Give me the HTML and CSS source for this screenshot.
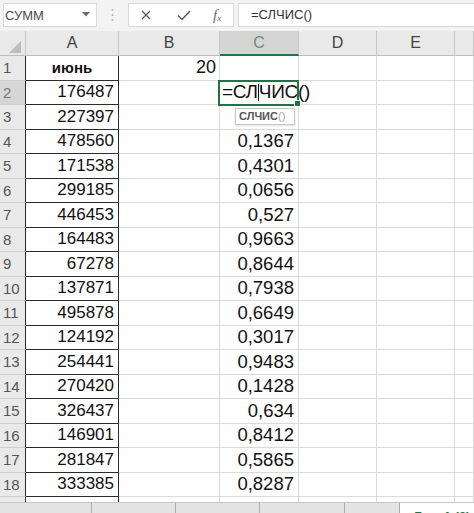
FILE: index.html
```html
<!DOCTYPE html>
<html lang="ru">
<head>
<meta charset="utf-8">
<link rel="stylesheet" href="styles.css">
</head>
<body>
<div class="app">
  <div class="toolbar">
    <div class="namebox">
      <span>СУММ</span>
      <svg class="dd" width="8" height="5" viewBox="0 0 8 5"><path d="M0 0H8L4 4.5Z" fill="#6b6b6b"/></svg>
    </div>
    <div class="grip">
      <svg width="3" height="14" viewBox="0 0 3 14"><circle cx="1.5" cy="2" r="1" fill="#b5b5b5"/><circle cx="1.5" cy="7" r="1" fill="#b5b5b5"/><circle cx="1.5" cy="12" r="1" fill="#b5b5b5"/></svg>
    </div>
    <div class="fbtns">
      <svg class="ico-x" width="10" height="10" viewBox="0 0 10 10"><path d="M1 1L9 9M9 1L1 9" stroke="#5a5a5a" stroke-width="1.3" fill="none"/></svg>
      <svg class="ico-ok" width="14" height="11" viewBox="0 0 14 11"><path d="M1 5.5L5 9.5L13 1" stroke="#5a5a5a" stroke-width="1.5" fill="none"/></svg>
      <span class="fx">f<sub>x</sub></span>
    </div>
    <div class="formula">=СЛЧИС()</div>
  </div>

  <div class="sheet">
    <div class="grid">
      <div class="c ch corner"><svg width="12" height="12" viewBox="0 0 12 12"><path d="M12 0V12H0Z" fill="#bdbdbd"/></svg></div>
      <div class="c ch">A</div>
      <div class="c ch">B</div>
      <div class="c ch active">C</div>
      <div class="c ch">D</div>
      <div class="c ch">E</div>
      <div class="c ch"></div>

      <div class="c rh">1</div><div class="c a bold">июнь</div><div class="c num big">20</div><div class="c"></div><div class="c"></div><div class="c"></div><div class="c"></div>
      <div class="c rh act">2</div><div class="c a num">176487</div><div class="c"></div><div class="c edit"><span class="etext">=СЛ<span class="caret"></span>ЧИС()</span><span class="tip"><b>СЛЧИС</b><i>()</i></span></div><div class="c"></div><div class="c"></div><div class="c"></div>
      <div class="c rh">3</div><div class="c a num">227397</div><div class="c"></div><div class="c"></div><div class="c"></div><div class="c"></div><div class="c"></div>
      <div class="c rh">4</div><div class="c a num">478560</div><div class="c"></div><div class="c num cv">0,1367</div><div class="c"></div><div class="c"></div><div class="c"></div>
      <div class="c rh">5</div><div class="c a num">171538</div><div class="c"></div><div class="c num cv">0,4301</div><div class="c"></div><div class="c"></div><div class="c"></div>
      <div class="c rh">6</div><div class="c a num">299185</div><div class="c"></div><div class="c num cv">0,0656</div><div class="c"></div><div class="c"></div><div class="c"></div>
      <div class="c rh">7</div><div class="c a num">446453</div><div class="c"></div><div class="c num cv">0,527</div><div class="c"></div><div class="c"></div><div class="c"></div>
      <div class="c rh">8</div><div class="c a num">164483</div><div class="c"></div><div class="c num cv">0,9663</div><div class="c"></div><div class="c"></div><div class="c"></div>
      <div class="c rh">9</div><div class="c a num">67278</div><div class="c"></div><div class="c num cv">0,8644</div><div class="c"></div><div class="c"></div><div class="c"></div>
      <div class="c rh">10</div><div class="c a num">137871</div><div class="c"></div><div class="c num cv">0,7938</div><div class="c"></div><div class="c"></div><div class="c"></div>
      <div class="c rh">11</div><div class="c a num">495878</div><div class="c"></div><div class="c num cv">0,6649</div><div class="c"></div><div class="c"></div><div class="c"></div>
      <div class="c rh">12</div><div class="c a num">124192</div><div class="c"></div><div class="c num cv">0,3017</div><div class="c"></div><div class="c"></div><div class="c"></div>
      <div class="c rh">13</div><div class="c a num">254441</div><div class="c"></div><div class="c num cv">0,9483</div><div class="c"></div><div class="c"></div><div class="c"></div>
      <div class="c rh">14</div><div class="c a num">270420</div><div class="c"></div><div class="c num cv">0,1428</div><div class="c"></div><div class="c"></div><div class="c"></div>
      <div class="c rh">15</div><div class="c a num">326437</div><div class="c"></div><div class="c num cv">0,634</div><div class="c"></div><div class="c"></div><div class="c"></div>
      <div class="c rh">16</div><div class="c a num">146901</div><div class="c"></div><div class="c num cv">0,8412</div><div class="c"></div><div class="c"></div><div class="c"></div>
      <div class="c rh">17</div><div class="c a num">281847</div><div class="c"></div><div class="c num cv">0,5865</div><div class="c"></div><div class="c"></div><div class="c"></div>
      <div class="c rh">18</div><div class="c a num">333385</div><div class="c"></div><div class="c num cv">0,8287</div><div class="c"></div><div class="c"></div><div class="c"></div>
      <div class="c rh"></div><div class="c a"></div><div class="c"></div><div class="c"></div><div class="c"></div><div class="c"></div><div class="c"></div>
    </div>
  </div>

  <div class="tabs">
    <div class="strip">
      <div class="tab t1"></div>
      <div class="tab t2"></div>
      <div class="tab t2"></div>
      <div class="tab t3"></div>
      <div class="tab t4"></div>
    </div>
    <div class="active-tab">Лист1 (2)</div>
  </div>
</div>
</body>
</html>
```

FILE: styles.css
```css
html, body {
  margin: 0;
  padding: 0;
}
body {
  width: 474px;
  height: 513px;
  overflow: hidden;
  background: #ffffff;
  font-family: "Liberation Sans", Arial, sans-serif;
  color: #111;
}
.app {
  display: flex;
  flex-direction: column;
  height: 513px;
}

/* formula bar */
.toolbar {
  flex: none;
  height: 31px;
  box-sizing: border-box;
  padding-top: 3px;
  background: #f3f3f3;
  display: flex;
  align-items: flex-start;
}
.namebox {
  margin-left: 3px;
  width: 94px;
  height: 24px;
  box-sizing: border-box;
  background: #fff;
  border: 1px solid #d9d9d9;
  display: flex;
  align-items: center;
  justify-content: space-between;
  padding: 0 6px 0 1px;
  font-size: 13px;
  color: #4a4a4a;
}
.namebox .dd {
  margin-top: -2px;
}
.grip {
  width: 31px;
  height: 24px;
  display: flex;
  align-items: center;
  justify-content: center;
}
.fbtns {
  width: 106px;
  height: 24px;
  box-sizing: border-box;
  background: #fff;
  border: 1px solid #d9d9d9;
  display: flex;
  align-items: center;
  padding-left: 12px;
}
.ico-x {
  margin-right: 26px;
}
.ico-ok {
  margin-right: 22px;
}
.fx {
  font-family: "Liberation Serif", "Times New Roman", serif;
  font-style: italic;
  font-size: 15px;
  color: #6a6a6a;
  line-height: 1;
}
.fx sub {
  font-size: 9px;
  vertical-align: -1px;
}
.formula {
  flex: 1;
  margin-left: 4px;
  height: 24px;
  box-sizing: border-box;
  background: #fff;
  border: 1px solid #d9d9d9;
  border-right: none;
  padding-left: 12px;
  font-size: 13px;
  line-height: 22px;
  color: #333;
}

/* sheet */
.sheet {
  flex: 1;
  overflow: hidden;
  position: relative;
}
.grid {
  display: grid;
  grid-template-columns: 26px 93px 101px 79px 78px 78px 19px;
  grid-template-rows: 25px;
  grid-auto-rows: 24.5px;
}
.c {
  box-sizing: border-box;
  border-right: 1px solid #dadada;
  border-bottom: 1px solid #dadada;
  display: flex;
  align-items: center;
  white-space: nowrap;
  overflow: hidden;
  font-size: 17px;
}
.ch {
  background: #e9e9e9;
  border-right-color: #c8c8c8;
  border-bottom-color: #bdbdbd;
  justify-content: center;
  font-size: 16px;
  color: #444;
}
.ch.active {
  background: #d4d4d4;
  border-bottom: 2px solid #217346;
  color: #7d8580;
}
.corner {
  align-items: flex-end;
  justify-content: flex-end;
  padding: 0 4px 2px 0;
}
.rh {
  background: #e9e9e9;
  border-right-color: #2b2b2b;
  border-bottom-color: #cfcfcf;
  padding-left: 3px;
  font-size: 15px;
  color: #555;
}
.rh.act {
  background: #d6d6d6;
  color: #6f7a72;
}
.a {
  border-right-color: #2b2b2b;
  border-bottom-color: #2b2b2b;
}
.bold {
  justify-content: center;
  font-weight: bold;
  font-size: 15px;
  color: #111;
}
.num {
  justify-content: flex-end;
  padding-right: 4px;
  color: #111;
}
.big {
  font-size: 18px;
  padding-right: 3px;
}
.cv {
  font-size: 18.5px;
  padding-right: 4px;
}

/* active cell being edited */
.edit {
  position: relative;
  overflow: visible;
  z-index: 2;
  padding-left: 2px;
}
.edit::before {
  content: "";
  position: absolute;
  left: -2px;
  top: -1px;
  right: -1px;
  bottom: -2px;
  border: 2px solid #217346;
  pointer-events: none;
}
.edit::after {
  content: "";
  position: absolute;
  right: -3px;
  bottom: -3px;
  width: 5px;
  height: 5px;
  background: #217346;
  border: 1px solid #fff;
}
.etext {
  font-size: 19px;
  color: #111;
  background: #fff;
  padding-right: 2px;
  display: flex;
  align-items: center;
  letter-spacing: -0.3px;
}
.caret {
  display: inline-block;
  width: 1px;
  height: 17px;
  background: #111;
}
.tip {
  position: absolute;
  left: 15px;
  top: 27px;
  width: 60px;
  height: 17px;
  box-sizing: border-box;
  background: #fff;
  border: 1px solid #c6c6c6;
  box-shadow: 0 1px 2px rgba(0,0,0,0.12);
  font-size: 11px;
  line-height: 15px;
  padding-left: 3px;
  color: #555;
}
.tip b {
  font-weight: bold;
}
.tip i {
  font-style: normal;
  color: #a8a8a8;
}

/* sheet tabs */
.tabs {
  flex: none;
  height: 11px;
  display: flex;
  overflow: hidden;
  border-top: 1px solid #c6c6c6;
  box-sizing: border-box;
  background: #fff;
}
.strip {
  width: 400px;
  display: flex;
  background: #e3e3e3;
  border-right: 1px solid #a8a8a8;
  box-sizing: border-box;
}
.tab {
  border-right: 1px solid #ababab;
}
.t1 { width: 91px; }
.t2 { width: 83px; }
.t3 { width: 84px; }
.t4 { border-right: none; flex: 1; }
.active-tab {
  padding: 7px 0 0 13px;
  font-size: 13px;
  line-height: 13px;
  font-weight: bold;
  color: #217346;
  white-space: nowrap;
}
```
